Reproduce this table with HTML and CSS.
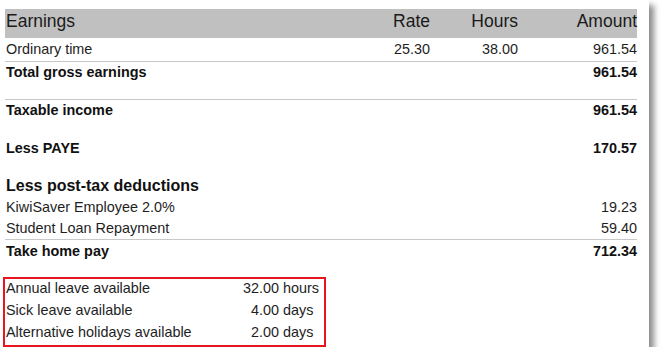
FILE: index.html
```html
<!DOCTYPE html>
<html lang="en">
<head>
  <meta charset="UTF-8" />
  <title>Payslip</title>
  <link rel="stylesheet" href="styles.css">
</head>
<body>
  <div class="paper">
    <div class="row head">
      <div class="label">Earnings</div>
      <div>Rate</div>
      <div>Hours</div>
      <div>Amount</div>
    </div>

    <div class="row item first">
      <div class="label">Ordinary time</div>
      <div>25.30</div>
      <div>38.00</div>
      <div>961.54</div>
    </div>

    <div class="row bold gross">
      <div class="label wide">Total gross earnings</div>
      <div>961.54</div>
    </div>

    <div class="row bold taxable">
      <div class="label wide">Taxable income</div>
      <div>961.54</div>
    </div>

    <div class="row bold paye">
      <div class="label wide">Less PAYE</div>
      <div>170.57</div>
    </div>

    <h3 class="section">Less post-tax deductions</h3>

    <div class="row item deduction">
      <div class="label wide">KiwiSaver Employee 2.0%</div>
      <div>19.23</div>
    </div>
    <div class="row item deduction last">
      <div class="label wide">Student Loan Repayment</div>
      <div>59.40</div>
    </div>

    <div class="row bold takehome">
      <div class="label wide">Take home pay</div>
      <div>712.34</div>
    </div>

    <!-- leave balances -->
    <div class="leave">
      <div class="leave-row">
        <span>Annual leave available</span>
        <span class="num">32.00</span>
        <span class="unit">hours</span>
      </div>
      <div class="leave-row">
        <span>Sick leave available</span>
        <span class="num">4.00</span>
        <span class="unit">days</span>
      </div>
      <div class="leave-row">
        <span>Alternative holidays available</span>
        <span class="num">2.00</span>
        <span class="unit">days</span>
      </div>
    </div>
  </div>
</body>
</html>
```

FILE: styles.css
```css
* {
  margin: 0;
  padding: 0;
  box-sizing: border-box;
}

body {
  background: #ffffff;
  font-family: 'Liberation Sans', Arial, sans-serif;
  color: #1e1e1e;
}

.paper {
  width: 649px;
  height: 347px;
  background: #ffffff;
  padding: 9px 12px 0 5px;
  box-shadow: 5px 5px 6px rgba(0, 0, 0, 0.45);
}

.row {
  display: grid;
  grid-template-columns: 1fr 88px 88px 119px;
  text-align: right;
  font-size: 14.4px;
  line-height: 16px;
}

.row .label {
  text-align: left;
  padding-left: 1px;
}

.row .wide {
  grid-column: span 3;
}

.head {
  background: #c0c0c0;
  height: 29px;
  font-size: 17.5px;
  line-height: 24px;
  color: #1a1a1a;
}

.item.first {
  line-height: 20px;
  padding: 1px 0 2px;
  border-bottom: 1px solid #c8c8c8;
}

.bold {
  font-weight: 700;
  color: #111111;
}

.gross {
  padding: 2px 0 19px;
  border-bottom: 1px solid #c8c8c8;
}

.taxable {
  padding: 2px 0 22px;
}

.paye {
  padding-bottom: 20px;
}

.section {
  font-size: 16px;
  line-height: 20px;
  font-weight: 700;
  color: #111111;
  padding-left: 1px;
}

.deduction {
  line-height: 22px;
}

.deduction.last {
  line-height: 21px;
  border-bottom: 1px solid #c8c8c8;
}

.takehome {
  line-height: 22px;
}

.leave {
  width: 323px;
  margin: 15px 0 0 -2px;
  border: 2px solid #e5161d;
  padding-left: 1px;
}

.leave-row {
  display: grid;
  grid-template-columns: 230px 43px auto;
  font-size: 14.4px;
  line-height: 19px;
  padding-bottom: 3px;
}

.leave-row .num {
  text-align: right;
}

.leave-row .unit {
  padding-left: 4px;
}
```
